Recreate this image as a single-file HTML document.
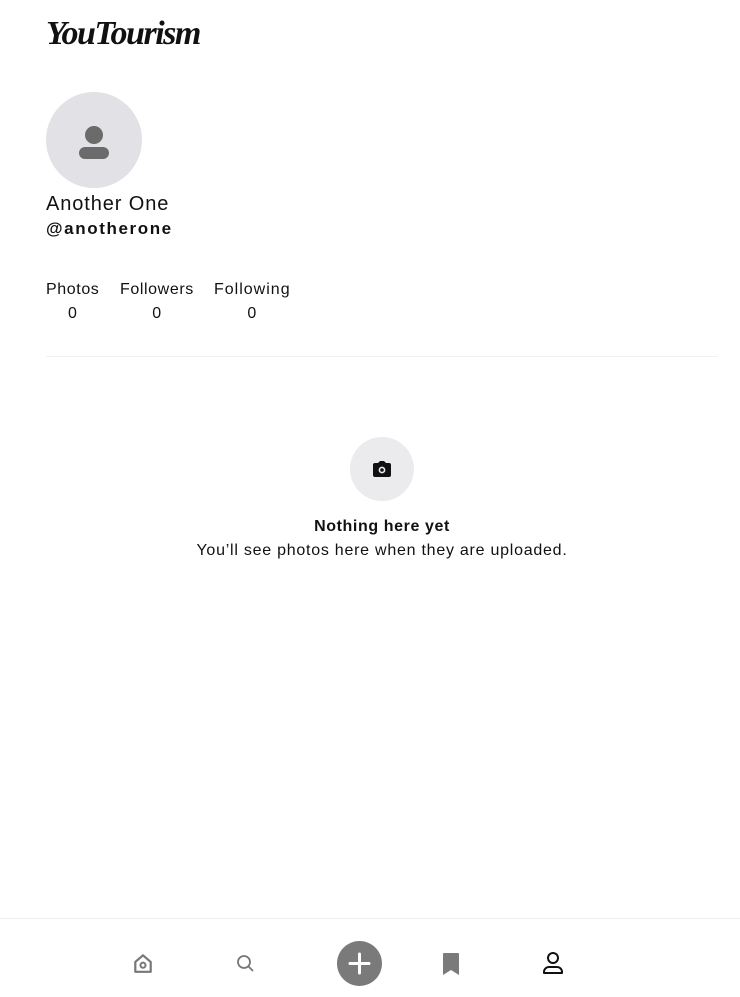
<!DOCTYPE html>
<html><head><meta charset="utf-8"><style>
*{margin:0;padding:0;box-sizing:border-box}
body{width:740px;height:997px;background:#fff;font-family:"Liberation Sans",sans-serif;color:#111;position:relative;overflow:hidden}
.abs{position:absolute}
.logo{left:46px;top:15px;font-family:"Liberation Serif",serif;font-style:italic;font-weight:bold;font-size:34px;letter-spacing:-1.5px;color:#111}
.av{left:46px;top:92px;width:96px;height:96px;border-radius:50%;background:#e2e2e6}
.name{left:46px;top:193px;font-size:20px;letter-spacing:0.9px}
.handle{left:46px;top:219px;font-size:17px;font-weight:bold;letter-spacing:1.6px}
.stat{top:281px;font-size:16px;text-align:center}
.stat div{margin-top:6px}
.hr{left:46px;top:356px;width:672px;height:1px;background:#f0f0f0}
.cam{left:350px;top:437px;width:64px;height:64px;border-radius:50%;background:#ebebed}
.t1{left:0;width:764px;top:518px;text-align:center;font-weight:bold;font-size:16px;letter-spacing:0.6px}
.t2{left:0;width:764px;top:542px;text-align:center;font-size:16px;letter-spacing:0.75px}
.nav{left:0;top:918px;width:740px;height:79px;border-top:1px solid #eee}
</style></head><body>
<div class="abs logo">YouTourism</div>
<div class="abs av"><svg width="96" height="96" viewBox="0 0 96 96"><circle cx="48" cy="43" r="9" fill="#6b6b6b"/><rect x="33" y="55" width="30" height="12" rx="6" fill="#6b6b6b"/></svg></div>
<div class="abs name">Another One</div>
<div class="abs handle">@anotherone</div>
<div class="abs stat" style="left:46px;letter-spacing:.6px">Photos<div>0</div></div>
<div class="abs stat" style="left:120px;letter-spacing:.6px">Followers<div>0</div></div>
<div class="abs stat" style="left:214px;letter-spacing:1px">Following<div>0</div></div>
<div class="abs hr"></div>
<div class="abs cam"><svg width="64" height="64" viewBox="0 0 64 64"><path d="M23 28a2 2 0 0 1 2-2h3l2-2h4l2 2h3a2 2 0 0 1 2 2v10a2 2 0 0 1-2 2H25a2 2 0 0 1-2-2z" fill="#111"/><circle cx="32" cy="33" r="2.6" fill="none" stroke="#ebebed" stroke-width="1.6"/></svg></div>
<div class="abs t1">Nothing here yet</div>
<div class="abs t2">You’ll see photos here when they are uploaded.</div>
<div class="abs nav">
<svg class="abs" style="left:132px;top:33px" width="22" height="22" viewBox="0 0 20 20"><path d="M3 9l7-6 7 6v9H3z" fill="none" stroke="#777" stroke-width="2" stroke-linejoin="round"/><circle cx="10" cy="12" r="2.3" fill="none" stroke="#777" stroke-width="1.8"/></svg>
<svg class="abs" style="left:235px;top:34px" width="20" height="20" viewBox="0 0 20 20"><circle cx="9" cy="9" r="6" fill="none" stroke="#777" stroke-width="1.8"/><path d="M13.5 13.5l4 4" stroke="#777" stroke-width="1.8" stroke-linecap="round"/></svg>
<svg class="abs" style="left:337px;top:22px" width="45" height="45" viewBox="0 0 45 45"><circle cx="22.5" cy="22.5" r="22.5" fill="#7a7a7a"/><path d="M22.5 13v19M13 22.5h19" stroke="#fff" stroke-width="3" stroke-linecap="round"/></svg>
<svg class="abs" style="left:441px;top:33px" width="20" height="24" viewBox="0 0 20 24"><path d="M2 2a1 1 0 0 1 1-1h14a1 1 0 0 1 1 1v21l-8-5-8 5z" fill="#7a7a7a"/></svg>
<svg class="abs" style="left:541px;top:32px" width="24" height="24" viewBox="0 0 24 24"><circle cx="12" cy="7" r="5" fill="none" stroke="#111" stroke-width="2"/><path d="M3 22v-1a5 5 0 0 1 5-5h8a5 5 0 0 1 5 5v1z" fill="none" stroke="#111" stroke-width="2" stroke-linejoin="round"/></svg>
</div>
</body></html>
